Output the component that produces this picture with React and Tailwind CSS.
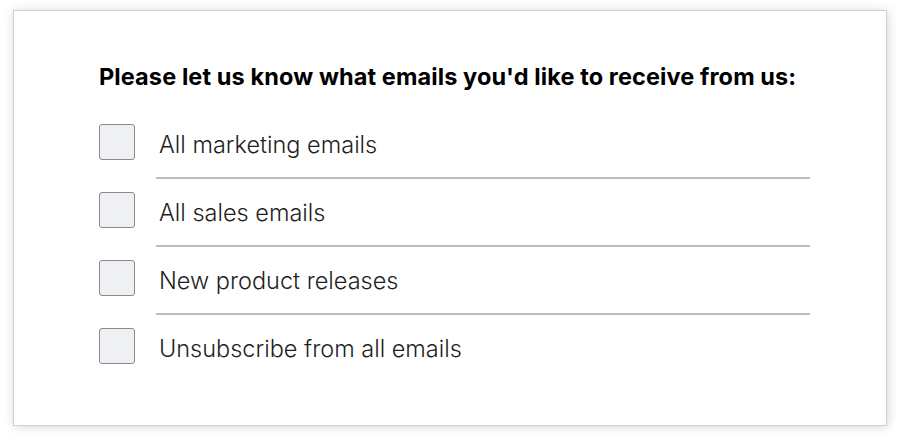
import React from "react";

const options = [
  "All marketing emails",
  "All sales emails",
  "New product releases",
  "Unsubscribe from all emails",
];

export default function App() {
  return (
    <div className="w-[900px] h-[437px] bg-white pt-[10px] pl-[13px]" style={{ fontFamily: "Inter, 'Open Sans', sans-serif" }}>
      <div className="w-[874px] h-[416px] bg-white border border-[#d0d0d0] shadow-[1px_1px_10px_rgba(0,0,0,0.16)] pt-[50px] pl-[85px]">
        <h2 className="text-[23.5px] leading-[32px] font-bold text-black tracking-[0.1px]">
          Please let us know what emails you'd like to receive from us:
        </h2>
        <div className="mt-[31px]">
          {options.map((label, i) => (
            <div key={label}>
              <label className="flex items-center h-[36px] cursor-pointer">
                <span className="w-[36px] h-[36px] rounded-[3px] border border-[#8a8a8a] bg-[#eef0f4] shrink-0" />
                <span className="ml-[24px] pt-[5px] text-[23.5px] leading-[30px] font-light text-[#1f1f1f]">{label}</span>
              </label>
              {i < options.length - 1 && (
                <div className="mt-[17px] mb-[13px] ml-[57px] w-[654px] h-[2px] bg-[#bcbcbc]" />
              )}
            </div>
          ))}
        </div>
      </div>
    </div>
  );
}
